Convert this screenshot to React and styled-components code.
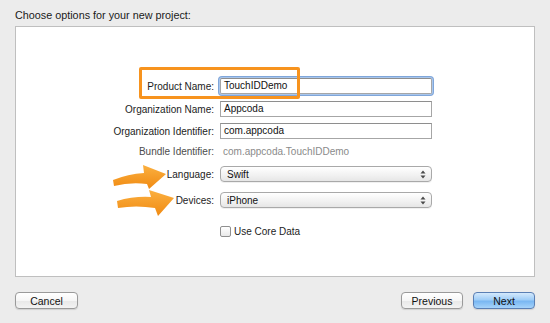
import styled, { createGlobalStyle } from "styled-components";

const GlobalStyle = createGlobalStyle`
  html, body {
    margin: 0;
    padding: 0;
    background: #ececec;
  }
  body {
    font-family: "Liberation Sans", Arial, sans-serif;
    color: #1c1c1c;
  }
`;

const Window = styled.div`
  position: relative;
  width: 550px;
  height: 323px;
  box-sizing: border-box;
  padding: 8px 15px 0 15px;
  background: #ececec;
  overflow: hidden;
`;

const Title = styled.div`
  height: 14px;
  line-height: 14px;
  font-size: 10.8px;
  margin-bottom: 4px;
  color: #1a1a1a;
`;

const Panel = styled.div`
  height: 251px;
  box-sizing: border-box;
  border: 1px solid #bfbfbf;
  background: #fff;
  padding-top: 51px;
`;

const Form = styled.div`
  display: flex;
  flex-direction: column;
`;

const Row = styled.div`
  display: grid;
  grid-template-columns: 198px 212px;
  column-gap: 6px;
  align-items: center;
  height: 16px;
  margin-top: ${(p) => p.$mt || 0}px;
`;

const Label = styled.div`
  justify-self: end;
  font-size: 10px;
  color: ${(p) => (p.$muted ? "#4c4c4c" : "#1c1c1c")};
  white-space: nowrap;
`;

const Field = styled.div`
  box-sizing: border-box;
  height: 16px;
  border: 1px solid #a6a6a6;
  border-top-color: #8e8e8e;
  background: #fff;
  font-size: 10px;
  line-height: 14px;
  padding-left: 3px;
  color: #111;
  box-shadow: ${(p) =>
    p.$focused ? "0 0 0 1px #a9c6ec, 0 0 0 2px #7fa6da" : "none"};
  border-radius: ${(p) => (p.$focused ? "2px" : "0")};
`;

const Value = styled.div`
  font-size: 10px;
  color: #8a8a8a;
  padding-left: 3px;
`;

const Popup = styled.div`
  box-sizing: border-box;
  height: 16px;
  display: flex;
  align-items: center;
  justify-content: space-between;
  border: 1px solid #a9a9a9;
  border-radius: 4px;
  background: linear-gradient(#ffffff, #f1f1f1 60%, #e6e6e6);
  box-shadow: 0 1px 0 rgba(0, 0, 0, 0.06);
  padding: 0 5px 0 6px;
  font-size: 10px;
  color: #111;
`;

const CheckRow = styled.label`
  display: flex;
  align-items: center;
  gap: 3px;
  font-size: 10px;
  color: #1c1c1c;
`;

const Box = styled.span`
  display: inline-block;
  width: 11px;
  height: 11px;
  box-sizing: border-box;
  border: 1px solid #8f8f8f;
  border-radius: 2px;
  background: linear-gradient(#ffffff, #e9e9e9);
`;

const Footer = styled.div`
  display: flex;
  align-items: center;
  justify-content: space-between;
  margin-top: 15px;
`;

const Group = styled.div`
  display: flex;
  gap: 10px;
`;

const Button = styled.button`
  box-sizing: border-box;
  width: ${(p) => p.$w || 62}px;
  height: 17px;
  padding: 0;
  border-radius: 4px;
  font-family: "Liberation Sans", Arial, sans-serif;
  font-size: 10.5px;
  color: #111;
  border: 1px solid ${(p) => (p.$primary ? "#5a7fb4" : "#9a9a9a")};
  background: ${(p) =>
    p.$primary
      ? "linear-gradient(#d4e9fc, #9fcdf7 45%, #79b7f2 55%, #a6d3fa)"
      : "linear-gradient(#ffffff, #f6f6f6 50%, #e9e9e9 55%, #f3f3f3)"};
  box-shadow: 0 1px 1px rgba(0, 0, 0, 0.12);
`;

const OrangeBox = styled.div`
  position: absolute;
  left: 139px;
  top: 67px;
  width: 161px;
  height: 32px;
  box-sizing: border-box;
  border: 3px solid #f7931e;
  border-radius: 2px;
  pointer-events: none;
`;

const Overlay = styled.svg`
  position: absolute;
  left: 0;
  top: 0;
  pointer-events: none;
`;

const Stepper = () => (
  <svg width="6" height="9" viewBox="0 0 6 9">
    <path d="M3 0.5 L5.5 3.5 H0.5 Z M3 8.5 L5.5 5.5 H0.5 Z" fill="#4a4a4a" />
  </svg>
);

export default function App() {
  return (
    <>
      <GlobalStyle />
      <Window>
        <Title>Choose options for your new project:</Title>
        <Panel>
          <Form>
            <Row>
              <Label>Product Name:</Label>
              <Field $focused>TouchIDDemo</Field>
            </Row>
            <Row $mt={7}>
              <Label>Organization Name:</Label>
              <Field>Appcoda</Field>
            </Row>
            <Row $mt={6}>
              <Label>Organization Identifier:</Label>
              <Field>com.appcoda</Field>
            </Row>
            <Row $mt={4}>
              <Label $muted>Bundle Identifier:</Label>
              <Value>com.appcoda.TouchIDDemo</Value>
            </Row>
            <Row $mt={7}>
              <Label>Language:</Label>
              <Popup>
                Swift
                <Stepper />
              </Popup>
            </Row>
            <Row $mt={10}>
              <Label>Devices:</Label>
              <Popup>
                iPhone
                <Stepper />
              </Popup>
            </Row>
            <Row $mt={15}>
              <span />
              <CheckRow>
                <Box />
                Use Core Data
              </CheckRow>
            </Row>
          </Form>
        </Panel>
        <Footer>
          <Button $w={63}>Cancel</Button>
          <Group>
            <Button>Previous</Button>
            <Button $primary>Next</Button>
          </Group>
        </Footer>
        <OrangeBox />
        <Overlay width="550" height="323" viewBox="0 0 550 323">
          <defs>
            <linearGradient id="arrowFill" x1="0" y1="0" x2="0" y2="1">
              <stop offset="0" stopColor="#fbb040" />
              <stop offset="1" stopColor="#f08a12" />
            </linearGradient>
          </defs>
          <path
            d="M113 180 Q128 174 144 173 L143 165 L166 174 L149 189 L147 184 Q130 182 114 186 Z"
            fill="url(#arrowFill)"
          />
          <path
            d="M117 201 Q134 196 151 197 L149 190 L174 198 L158 216 L155 208 Q136 205 118 208 Z"
            fill="url(#arrowFill)"
          />
        </Overlay>
      </Window>
    </>
  );
}
